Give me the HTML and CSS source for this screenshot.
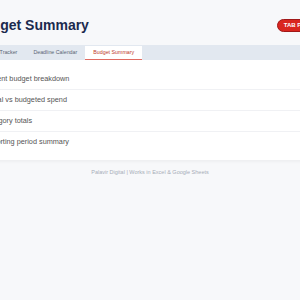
FILE: index.html
```html
<!DOCTYPE html>
<html lang="en">
<head>
    <meta charset="UTF-8">
    <meta name="viewport" content="width=device-width, initial-scale=1.0">
    <title>Budget Summary</title>
    <link rel="stylesheet" href="styles.css">
</head>
<body>

    <div class="app">
        <header class="header">
            <h1>Budget Summary</h1>
            <span class="badge">TAB PREVIEW</span>
        </header>

        <nav class="tabs">
            <span class="tab">Grant Tracker</span>
            <span class="tab">Deadline Calendar</span>
            <span class="tab active">Budget Summary</span>
        </nav>

        <div class="panel">
            <div class="row">Current budget breakdown</div>
            <div class="row">Actual vs budgeted spend</div>
            <div class="row">Category totals</div>
            <div class="row">Reporting period summary</div>
        </div>

        <p class="footer">Palavir Digital | Works in Excel &amp; Google Sheets</p>
    </div>

</body>
</html>
```

FILE: styles.css
```css
body {
    font-family: 'Liberation Sans', Arial, sans-serif;
    background-color: #f7f8fa;
    margin: 0;
    padding: 0;
    display: flex;
    justify-content: center;
    min-height: 100vh;
}

.app {
    width: 386px;
    flex-shrink: 0;
}

.header {
    height: 45px;
    padding: 0 11px 0 16px;
    box-sizing: border-box;
    display: flex;
    justify-content: space-between;
    align-items: center;
    background-color: #f7f8fa;
}

h1 {
    margin: 4px 0 0;
    font-size: 14px;
    font-weight: bold;
    color: #1b2a4e;
}

.badge {
    margin-top: 6px;
    padding: 0 6px;
    line-height: 11px;
    border: 1px solid #a01818;
    border-radius: 7px;
    background-color: #d9261f;
    color: #ffffff;
    font-size: 6px;
    font-weight: bold;
}

.tabs {
    display: flex;
    height: 15px;
    padding: 1px 20px 0;
    box-sizing: border-box;
    background-color: #e2e8f0;
}

.tab {
    padding: 0 8px;
    font-size: 5.3px;
    line-height: 13px;
    color: #5b6574;
}

.tab.active {
    background-color: #ffffff;
    color: #c0392b;
    border-bottom: 1px solid #e06b62;
}

.panel {
    background-color: #ffffff;
    padding: 9px 0 8px;
    box-shadow: 0 2px 3px rgba(0, 0, 0, 0.04);
}

.row {
    padding: 0 26px;
    height: 20px;
    line-height: 20px;
    font-size: 7.3px;
    color: #555555;
    border-bottom: 1px solid #f0f1f4;
}

.row:last-child {
    border-bottom: none;
}

.footer {
    margin: 9px 0 0;
    text-align: center;
    font-size: 5.5px;
    color: #a7adb8;
}
```
